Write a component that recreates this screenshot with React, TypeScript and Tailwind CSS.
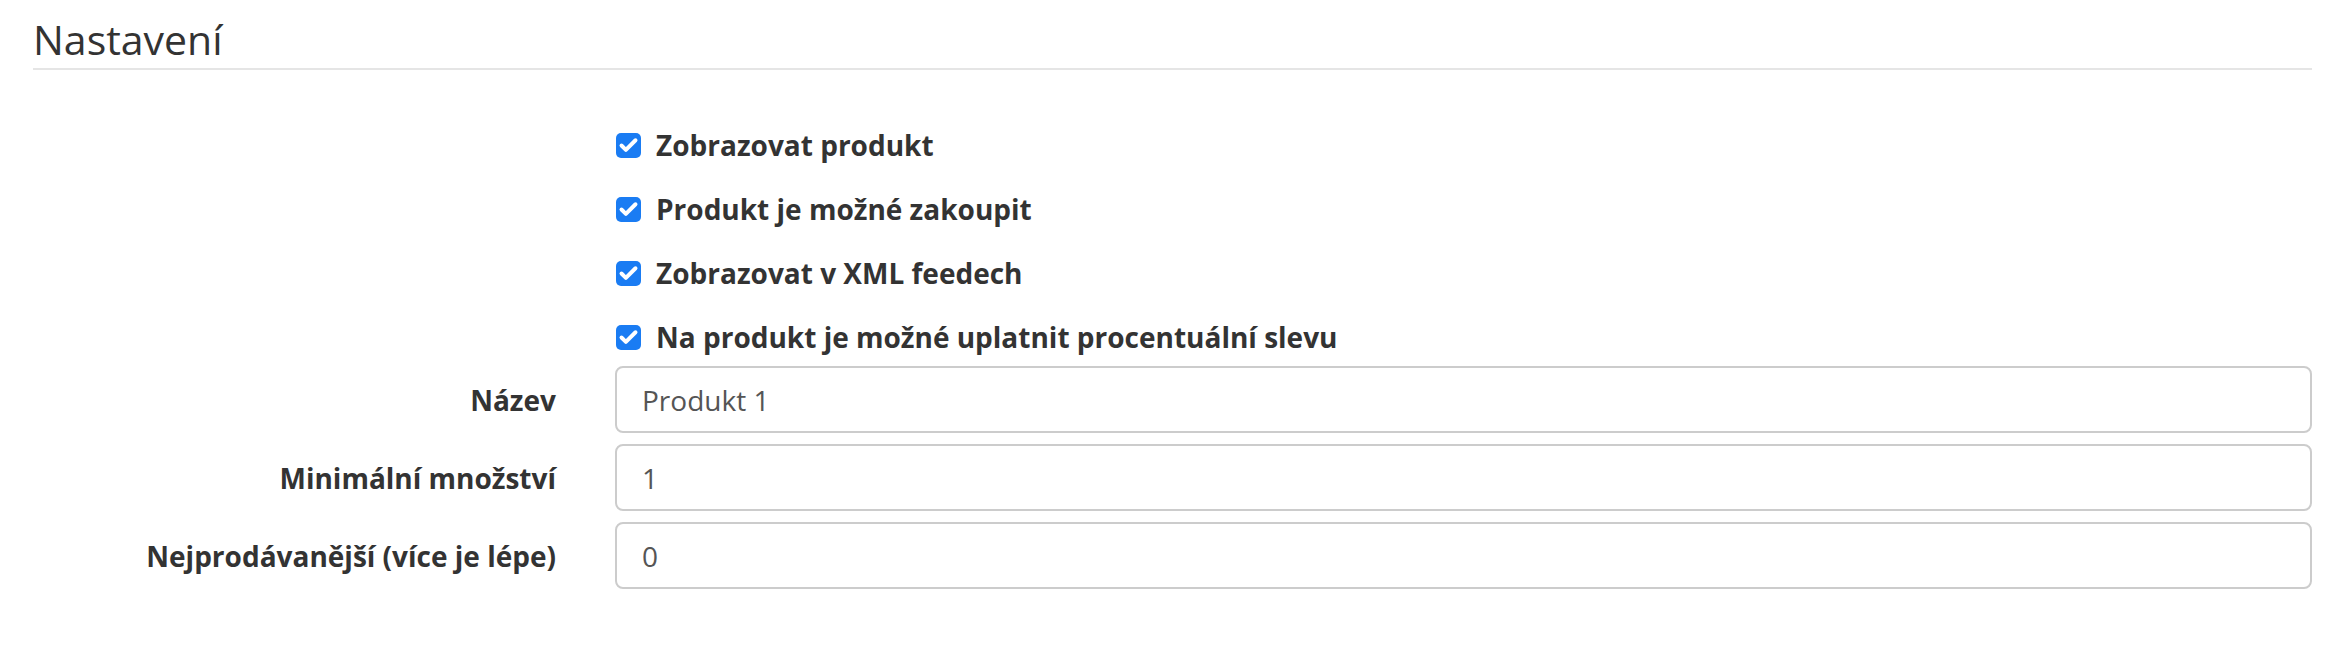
import { Check } from 'lucide-react';

const checks = [
  'Zobrazovat produkt',
  'Produkt je možné zakoupit',
  'Zobrazovat v XML feedech',
  'Na produkt je možné uplatnit procentuální slevu',
];

const fields = [
  { label: 'Název', value: 'Produkt 1' },
  { label: 'Minimální množství', value: '1' },
  { label: 'Nejprodávanější (více je lépe)', value: '0' },
];

export default function App() {
  return (
    <main
      className="min-h-screen bg-white text-[#333] pl-[33px] pr-[30px]"
      style={{ fontFamily: '"Open Sans", "Liberation Sans", sans-serif' }}
    >
      <div className="pt-[17px]">
        <h3 className="text-[41px] leading-[44px] font-normal pb-[7px] border-b-2 border-[#e5e5e5]">
          Nastavení
        </h3>
      </div>

      <div className="pt-[54px] flex flex-col gap-[22px]">
        {checks.map((c) => (
          <div key={c} className="flex h-[42px] items-center">
            <div className="w-[583px] shrink-0" />
            <label className="flex items-center gap-[15px] text-[28px] font-bold">
              <span className="w-[25px] h-[25px] rounded-[5px] bg-[#1a7cf3] flex items-center justify-center">
                <Check className="w-[21px] h-[21px] text-white" strokeWidth={4.5} />
              </span>
              {c}
            </label>
          </div>
        ))}
      </div>

      <div className="pt-[8px] flex flex-col gap-[11px]">
        {fields.map((f) => (
          <div key={f.label} className="flex items-center">
            <div className="w-[523px] shrink-0 text-right text-[28px] font-bold">{f.label}</div>
            <div className="ml-[59px] flex-1 h-[67px] border-2 border-[#cccccc] rounded-[8px] flex items-center px-[25px] text-[28px] text-[#555]">
              {f.value}
            </div>
          </div>
        ))}
      </div>
    </main>
  );
}
